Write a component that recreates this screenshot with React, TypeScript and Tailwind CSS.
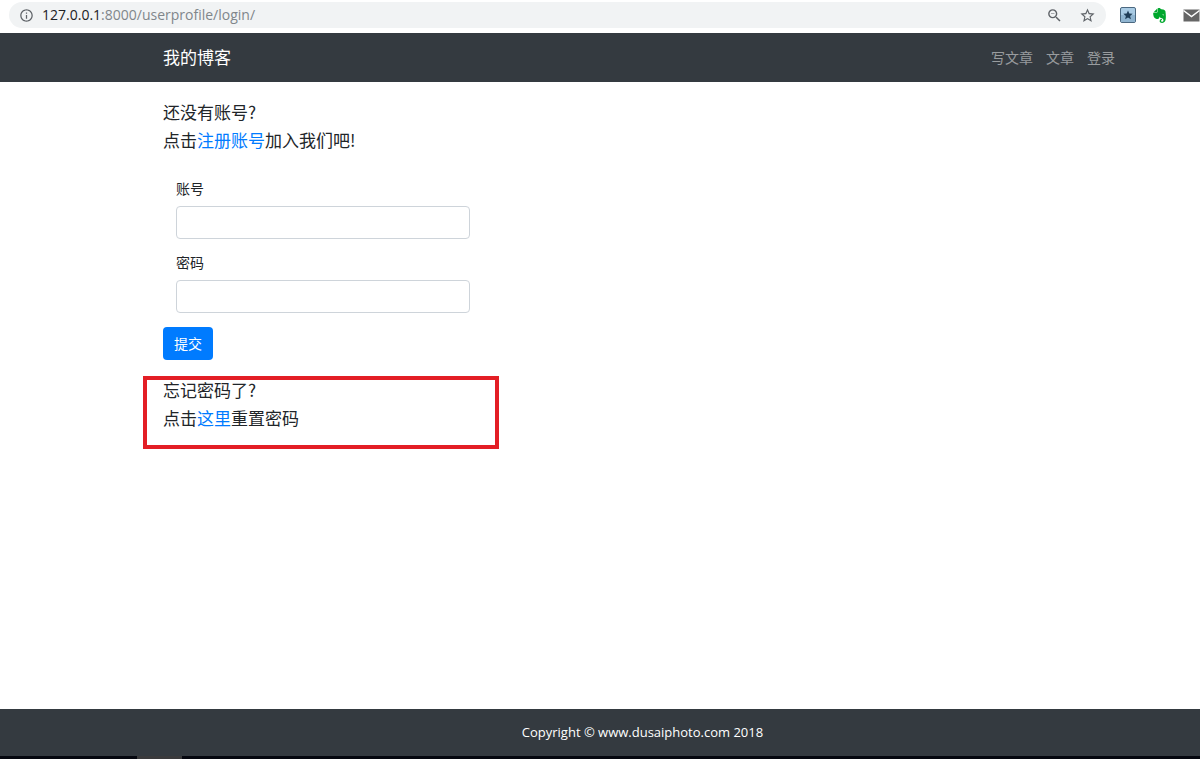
import { MdInfoOutline, MdStarBorder, MdZoomOut } from 'react-icons/md'

import { SiEvernote } from 'react-icons/si'

const navLinks = ['写文章', '文章', '登录']

const fields = [
    { id: 'username', label: '账号', type: 'text' },
    { id: 'password', label: '密码', type: 'password' },
]

function AddressBar() {
    return (
        <div className="flex h-[33px] items-start bg-white pt-0.5 pl-[9px]">
            <div className="flex h-[26px] flex-1 items-center rounded-full bg-[#f1f3f4] px-2.5">
                <MdInfoOutline size={15} className="text-[#5f6368]" />
                <p className="ml-2 flex-1 font-['Open_Sans',sans-serif] text-sm text-[#80868b]">
                    <span className="text-[#202124]">127.0.0.1</span>
                    :8000/userprofile/login/
                </p>
                <button type="button" aria-label="缩放" className="mr-4">
                    <MdZoomOut size={17} className="text-[#5f6368]" />
                </button>
                <button type="button" aria-label="收藏">
                    <MdStarBorder size={17} className="text-[#5f6368]" />
                </button>
            </div>

            <div className="flex h-[26px] shrink-0 items-center gap-4 pl-3.5">
                <svg width="16" height="16" viewBox="0 0 16 16">
                    <rect
                        x="0.5"
                        y="0.5"
                        width="15"
                        height="15"
                        rx="1.5"
                        fill="#a9cbe4"
                        stroke="#4b6880"
                    />
                    <rect x="1" y="8" width="14" height="7" fill="#8fb4d0" />
                    <path
                        d="M8 3.4l1.3 3.2 3.4.2-2.6 2.2.8 3.3L8 10.5l-2.9 1.8.8-3.3-2.6-2.2 3.4-.2z"
                        fill="#1f3d57"
                    />
                </svg>
                <SiEvernote size={15} className="text-[#00a82d]" />
                <svg width="17" height="13" viewBox="0 0 17 13">
                    <rect x="0.5" y="0.5" width="16" height="12" fill="#666" />
                    <path
                        d="M0.5 1.5L8.5 7.5L16.5 1.5"
                        fill="none"
                        stroke="#fff"
                        strokeWidth="1.5"
                    />
                </svg>
            </div>
        </div>
    )
}

function Header() {
    return (
        <header className="flex h-[49px] items-center justify-between bg-[#343a40] pb-0.5 pl-[163px] pr-[85px]">
            <a href="#" className="text-[17px] leading-7 text-white">
                我的博客
            </a>
            <nav className="flex gap-[13px] text-sm text-white/50">
                {navLinks.map((link) => (
                    <a key={link} href="#">
                        {link}
                    </a>
                ))}
            </nav>
        </header>
    )
}

function LoginForm() {
    return (
        <form className="mt-6">
            <div className="ml-[13px] flex w-[294px] flex-col gap-[13px]">
                {fields.map((field) => (
                    <div key={field.id}>
                        <label
                            htmlFor={field.id}
                            className="mb-2 block text-sm leading-5"
                        >
                            {field.label}
                        </label>
                        <input
                            id={field.id}
                            type={field.type}
                            className="block h-[33px] w-full rounded border border-[#ced4da] bg-white px-2.5 text-sm"
                        />
                    </div>
                ))}
            </div>
            <button
                type="button"
                className="mt-3.5 block h-[33px] w-[50px] rounded bg-[#007bff] pb-0.5 text-sm text-white"
            >
                提交
            </button>
        </form>
    )
}

export default function App() {
    return (
        <div className="flex min-h-screen flex-col bg-white font-['Noto_Sans_CJK_SC',sans-serif] text-[#212529]">
            <AddressBar />
            <Header />

            <main className="flex-1 pl-[163px] pr-[85px] pt-4 text-[17px] leading-7">
                <h5>还没有账号?</h5>
                <h5>
                    点击
                    <a href="#" className="text-[#007bff]">
                        注册账号
                    </a>
                    加入我们吧!
                </h5>

                <LoginForm />

                <section className="relative mt-4">
                    <h5>忘记密码了?</h5>
                    <h5>
                        点击
                        <a href="#" className="text-[#007bff]">
                            这里
                        </a>
                        重置密码
                    </h5>
                    {/* highlight frame */}
                    <div className="pointer-events-none absolute top-0 -left-5 h-[73px] w-[356px] border-4 border-[#e31e25]" />
                </section>
            </main>

            <footer className="flex h-[47px] items-center justify-center bg-[#343a40] pl-[85px] font-['Open_Sans',sans-serif] text-[13px] text-white">
                <p>Copyright © www.dusaiphoto.com 2018</p>
            </footer>
            <div className="h-[3px] bg-[#05070f] pl-[137px]">
                <div className="h-full w-[45px] bg-[#3a3a3c]" />
            </div>
        </div>
    )
}
